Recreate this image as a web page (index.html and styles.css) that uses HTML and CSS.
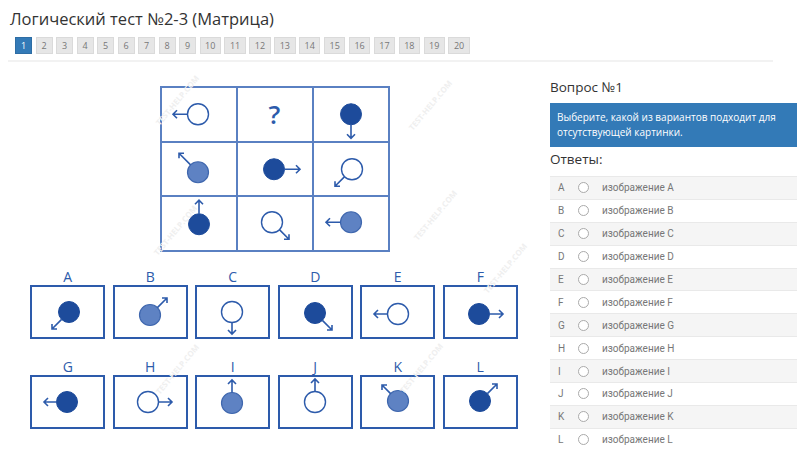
FILE: index.html
```html
<!DOCTYPE html>
<html lang="ru">
<head>
    <meta charset="UTF-8">
    <meta name="viewport" content="width=device-width, initial-scale=1.0">
    <title>Логический тест №2-3 (Матрица)</title>
    <link rel="stylesheet" href="styles.css">
</head>
<body>
    <h1>Логический тест №2-3 (Матрица)</h1>

    <div class="pager">
        <span class="pg active">1</span>
        <span class="pg">2</span>
        <span class="pg">3</span>
        <span class="pg">4</span>
        <span class="pg">5</span>
        <span class="pg">6</span>
        <span class="pg">7</span>
        <span class="pg">8</span>
        <span class="pg">9</span>
        <span class="pg wide">10</span>
        <span class="pg wide">11</span>
        <span class="pg wide">12</span>
        <span class="pg wide">13</span>
        <span class="pg wide">14</span>
        <span class="pg wide">15</span>
        <span class="pg wide">16</span>
        <span class="pg wide">17</span>
        <span class="pg wide">18</span>
        <span class="pg wide">19</span>
        <span class="pg wide">20</span>
    </div>
    <div class="rule"></div>

    <div class="main">
        <div class="puzzle">
            <div class="matrix">
                <div class="cell">
                    <svg viewBox="0 0 74 52"><circle class="c-white" cx="36" cy="26" r="10.5"/><path class="arr" d="M25.5 26 L11 26 M15 22 L11 26 L15 30"/></svg>
                </div>
                <div class="cell q">?</div>
                <div class="cell">
                    <svg viewBox="0 0 74 52"><circle class="c-dark" cx="37" cy="26" r="10.5"/><path class="arr" d="M37 36.5 L37 50 M33 46 L37 50 L41 46"/></svg>
                </div>
                <div class="cell">
                    <svg viewBox="0 0 74 52"><circle class="c-mid" cx="36" cy="29" r="10.5"/><path class="arr" d="M28.6 21.6 L17 10 M22 10 L17 10 L17 15"/></svg>
                </div>
                <div class="cell">
                    <svg viewBox="0 0 74 52"><circle class="c-dark" cx="36" cy="26" r="10.5"/><path class="arr" d="M46.5 26 L62 26 M58 22 L62 26 L58 30"/></svg>
                </div>
                <div class="cell">
                    <svg viewBox="0 0 74 52"><circle class="c-white" cx="38" cy="26" r="10.5"/><path class="arr" d="M30.6 33.4 L21 43 M26 43 L21 43 L21 38"/></svg>
                </div>
                <div class="cell">
                    <svg viewBox="0 0 74 52"><circle class="c-dark" cx="37" cy="27" r="10.5"/><path class="arr" d="M37 16.5 L37 3 M33 7 L37 3 L41 7"/></svg>
                </div>
                <div class="cell">
                    <svg viewBox="0 0 74 52"><circle class="c-white" cx="34" cy="25" r="10.5"/><path class="arr" d="M41.4 32.4 L51 42 M46 42 L51 42 L51 37"/></svg>
                </div>
                <div class="cell">
                    <svg viewBox="0 0 74 52"><circle class="c-mid" cx="37" cy="25" r="10.5"/><path class="arr" d="M26.5 25 L12 25 M16 21 L12 25 L16 29"/></svg>
                </div>
            </div>

            <div class="options">
                <div class="opt">
                    <div class="opt-label">A</div>
                    <div class="opt-box"><svg viewBox="0 0 71 50"><circle class="c-dark" cx="37" cy="25" r="10.5"/><path class="arr" d="M29.6 32.4 L20 42 M25 42 L20 42 L20 37"/></svg></div>
                </div>
                <div class="opt">
                    <div class="opt-label">B</div>
                    <div class="opt-box"><svg viewBox="0 0 71 50"><circle class="c-mid" cx="35" cy="28" r="10.5"/><path class="arr" d="M42.4 20.6 L52 11 M47 11 L52 11 L52 16"/></svg></div>
                </div>
                <div class="opt">
                    <div class="opt-label">C</div>
                    <div class="opt-box"><svg viewBox="0 0 71 50"><circle class="c-white" cx="35" cy="25" r="10.5"/><path class="arr" d="M35 35.5 L35 47 M31 43 L35 47 L39 43"/></svg></div>
                </div>
                <div class="opt">
                    <div class="opt-label">D</div>
                    <div class="opt-box"><svg viewBox="0 0 71 50"><circle class="c-dark" cx="35" cy="26" r="10.5"/><path class="arr" d="M42.4 33.4 L52 43 M47 43 L52 43 L52 38"/></svg></div>
                </div>
                <div class="opt">
                    <div class="opt-label">E</div>
                    <div class="opt-box"><svg viewBox="0 0 71 50"><circle class="c-white" cx="36" cy="27" r="10.5"/><path class="arr" d="M25.5 27 L12 27 M16 23 L12 27 L16 31"/></svg></div>
                </div>
                <div class="opt">
                    <div class="opt-label">F</div>
                    <div class="opt-box"><svg viewBox="0 0 71 50"><circle class="c-dark" cx="34" cy="27" r="10.5"/><path class="arr" d="M44.5 27 L58 27 M54 23 L58 27 L54 31"/></svg></div>
                </div>
                <div class="opt">
                    <div class="opt-label">G</div>
                    <div class="opt-box"><svg viewBox="0 0 71 50"><circle class="c-dark" cx="35" cy="25" r="10.5"/><path class="arr" d="M24.5 25 L12 25 M16 21 L12 25 L16 29"/></svg></div>
                </div>
                <div class="opt">
                    <div class="opt-label">H</div>
                    <div class="opt-box"><svg viewBox="0 0 71 50"><circle class="c-white" cx="33" cy="25" r="10.5"/><path class="arr" d="M43.5 25 L57 25 M53 21 L57 25 L53 29"/></svg></div>
                </div>
                <div class="opt">
                    <div class="opt-label">I</div>
                    <div class="opt-box"><svg viewBox="0 0 71 50"><circle class="c-mid" cx="35" cy="26" r="10.5"/><path class="arr" d="M35 15.5 L35 3 M31 7 L35 3 L39 7"/></svg></div>
                </div>
                <div class="opt">
                    <div class="opt-label">J</div>
                    <div class="opt-box"><svg viewBox="0 0 71 50"><circle class="c-white" cx="35" cy="25" r="10.5"/><path class="arr" d="M35 14.5 L35 2 M31 6 L35 2 L39 6"/></svg></div>
                </div>
                <div class="opt">
                    <div class="opt-label">K</div>
                    <div class="opt-box"><svg viewBox="0 0 71 50"><circle class="c-mid" cx="36" cy="24" r="10.5"/><path class="arr" d="M28.6 16.6 L20 8 M25 8 L20 8 L20 13"/></svg></div>
                </div>
                <div class="opt">
                    <div class="opt-label">L</div>
                    <div class="opt-box"><svg viewBox="0 0 71 50"><circle class="c-dark" cx="35" cy="24" r="10.5"/><path class="arr" d="M42.4 16.6 L52 7 M47 7 L52 7 L52 12"/></svg></div>
                </div>
            </div>

            <span class="wm" style="left: 167px; top: 23px;">TEST-HELP.COM</span>
            <span class="wm" style="left: 420px; top: 28px;">TEST-HELP.COM</span>
            <span class="wm" style="left: 165px; top: 153px;">TEST-HELP.COM</span>
            <span class="wm" style="left: 425px; top: 138px;">TEST-HELP.COM</span>
            <span class="wm" style="left: 167px; top: 292px;">TEST-HELP.COM</span>
            <span class="wm" style="left: 411px; top: 291px;">TEST-HELP.COM</span>
            <span class="wm" style="left: 495px; top: 191px;">TEST-HELP.COM</span>
        </div>

        <div class="side">
            <h3>Вопрос №1</h3>
            <div class="task">Выберите, какой из вариантов подходит для отсутствующей картинки.</div>
            <h3 class="answers-title">Ответы:</h3>
            <div class="answers">
                <div class="ans"><span class="ans-key">A</span><span class="radio"></span><span>изображение A</span></div>
                <div class="ans"><span class="ans-key">B</span><span class="radio"></span><span>изображение B</span></div>
                <div class="ans"><span class="ans-key">C</span><span class="radio"></span><span>изображение C</span></div>
                <div class="ans"><span class="ans-key">D</span><span class="radio"></span><span>изображение D</span></div>
                <div class="ans"><span class="ans-key">E</span><span class="radio"></span><span>изображение E</span></div>
                <div class="ans"><span class="ans-key">F</span><span class="radio"></span><span>изображение F</span></div>
                <div class="ans"><span class="ans-key">G</span><span class="radio"></span><span>изображение G</span></div>
                <div class="ans"><span class="ans-key">H</span><span class="radio"></span><span>изображение H</span></div>
                <div class="ans"><span class="ans-key">I</span><span class="radio"></span><span>изображение I</span></div>
                <div class="ans"><span class="ans-key">J</span><span class="radio"></span><span>изображение J</span></div>
                <div class="ans"><span class="ans-key">K</span><span class="radio"></span><span>изображение K</span></div>
                <div class="ans"><span class="ans-key">L</span><span class="radio"></span><span>изображение L</span></div>
            </div>
        </div>
    </div>
</body>
</html>
```

FILE: styles.css
```css
body {
    font-family: "Open Sans", "Liberation Sans", sans-serif;
    color: #333;
    margin: 0;
    padding: 0 3px 0 10px;
    background: #fff;
}

h1 {
    font-size: 16.5px;
    font-weight: 400;
    line-height: 24px;
    margin: 7px 0 0 0;
}

.pager {
    display: flex;
    gap: 3.5px;
    margin: 6px 0 0 5px;
}

.pg {
    width: 17px;
    height: 17px;
    box-sizing: border-box;
    border: 1px solid #dadada;
    background: #e6e6e6;
    color: #777;
    font-size: 9px;
    line-height: 15px;
    text-align: center;
}

.pg.wide {
    width: 21.4px;
}

.pg.active {
    background: #337ab7;
    border-color: #2e6da4;
    color: #fff;
}

.rule {
    margin: 6px 24px 0 -2px;
    border-top: 2px solid #f2f2f2;
}

.main {
    display: flex;
    gap: 12px;
    margin-top: 15px;
}

/* puzzle picture */
.puzzle {
    position: relative;
    width: 528px;
    flex-shrink: 0;
    display: flex;
    flex-direction: column;
    align-items: center;
}

.matrix {
    display: grid;
    grid-template-columns: repeat(3, 74px);
    grid-template-rows: repeat(3, 52.5px);
    gap: 2px;
    padding: 2px;
    margin: 9px 0 0 1px;
    background: #5a80c2;
}

.cell {
    background: #fff;
}

.cell svg, .opt-box svg {
    display: block;
    width: 100%;
    height: 100%;
}

.cell.q {
    font-size: 26px;
    font-weight: 600;
    color: #2d5bab;
    text-align: center;
    line-height: 52px;
}

.options {
    display: grid;
    grid-template-columns: repeat(6, 75px);
    column-gap: 7.5px;
    row-gap: 20px;
    margin-top: 17px;
}

.opt-label {
    font-size: 14px;
    line-height: 16px;
    color: #2d5bab;
    text-align: center;
}

.opt-box {
    height: 54px;
    border: 2px solid #2d5bab;
    box-sizing: border-box;
}

.arr {
    fill: none;
    stroke: #2d5bab;
    stroke-width: 1.6;
}

.c-white {
    fill: #fff;
    stroke: #2d5bab;
    stroke-width: 1.4;
}

.c-dark {
    fill: #1d4b9b;
    stroke: #1d4b9b;
    stroke-width: 1;
}

.c-mid {
    fill: #5e82c3;
    stroke: #3f67ae;
    stroke-width: 1.2;
}

.wm {
    position: absolute;
    transform: translate(-50%, -50%) rotate(-50deg);
    font-size: 8px;
    font-weight: 700;
    color: #efefef;
    white-space: nowrap;
    pointer-events: none;
}

/* question side */
.side {
    flex: 1;
}

.side h3 {
    font-size: 13.5px;
    font-weight: 400;
    line-height: 20px;
    margin: 0;
}

.task {
    margin-top: 6px;
    background: #337ab7;
    color: #fff;
    font-size: 10px;
    line-height: 15px;
    padding: 7px 7px;
}

.side h3.answers-title {
    margin-top: 2px;
}

.answers {
    margin-top: 7px;
    font-family: Roboto, "Liberation Sans", sans-serif;
    font-size: 10px;
    color: #777;
}

.ans {
    display: flex;
    align-items: center;
    height: 22.9px;
    padding-left: 8px;
    border-top: 1px solid #e9e9e9;
    box-sizing: border-box;
}

.ans:nth-child(odd) {
    background: #f5f5f5;
}

.ans-key {
    width: 20px;
}

.radio {
    width: 9px;
    height: 9px;
    border: 1px solid #aaa;
    border-radius: 50%;
    margin-right: 13px;
    background: #fff;
}
```
